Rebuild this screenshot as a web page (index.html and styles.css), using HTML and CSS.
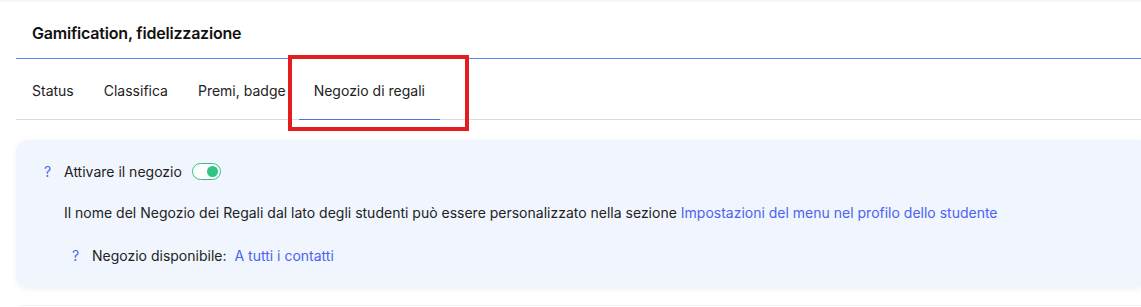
FILE: index.html
```html
<!DOCTYPE html>
<html lang="it">
<head>
    <meta charset="UTF-8">
    <title>Gamification, fidelizzazione</title>
    <link rel="stylesheet" href="styles.css">
</head>
<body>
    <div class="page">
        <div class="page-header">
            <h1>Gamification, fidelizzazione</h1>
        </div>

        <nav class="tabs">
            <a class="tab" href="#">Status</a>
            <a class="tab" href="#">Classifica</a>
            <a class="tab" href="#">Premi, badge</a>
            <a class="tab active" href="#">Negozio di regali<span class="highlight"></span></a>
        </nav>

        <div class="panel">
            <div class="row">
                <span class="help">?</span>
                <span class="label">Attivare il negozio</span>
                <span class="toggle on"><span class="knob"></span></span>
            </div>
            <p class="note">
                Il nome del Negozio dei Regali dal lato degli studenti può essere personalizzato nella sezione
                <a href="#">Impostazioni del menu nel profilo dello studente</a>
            </p>
            <div class="row sub">
                <span class="help">?</span>
                <span class="label">Negozio disponibile:</span>
                <a class="value" href="#">A tutti i contatti</a>
            </div>
        </div>

        <div class="next-card"></div>
    </div>
</body>
</html>
```

FILE: styles.css
```css
* {
    margin: 0;
    padding: 0;
    box-sizing: border-box;
}

body {
    font-family: 'Inter', 'Noto Sans', sans-serif;
    background: #fff;
    color: #222;
    font-size: 14px;
    overflow: hidden;
}

.page {
    padding-left: 16px;
    border-top: 2px solid #f6f6f7;
}

a {
    text-decoration: none;
}

.page-header {
    padding: 21px 16px 0;
    height: 57px;
    border-bottom: 1px solid #5b85f5;
}

.page-header h1 {
    font-size: 16px;
    font-weight: 600;
    color: #111;
    letter-spacing: -0.2px;
}

.tabs {
    display: flex;
    height: 61px;
    padding-left: 16px;
    border-bottom: 1px solid #dcdcdc;
}

.tab {
    position: relative;
    display: flex;
    align-items: center;
    padding-top: 2px;
    margin-right: 30px;
    color: #222;
    font-size: 14px;
}

.tab.active {
    padding: 2px 15px 0;
    margin-left: -17px;
    border-bottom: 1px solid #4c6ef0;
    margin-bottom: -1px;
}

/* annotation frame over the active tab */
.highlight {
    position: absolute;
    left: -11px;
    right: -29px;
    top: -4px;
    bottom: -12px;
    border: 4px solid #e31c1f;
    pointer-events: none;
}

.panel {
    margin-top: 20px;
    background: #f1f6fe;
    border-radius: 12px 0 0 12px;
    box-shadow: 0 2px 6px rgba(0, 0, 0, 0.06);
    padding: 21px 0 22px 28px;
    height: 147px;
}

.row {
    display: flex;
    align-items: center;
    height: 20px;
}

.help {
    color: #4866f5;
    font-size: 14px;
    width: 20px;
}

.label {
    margin-right: 10px;
}

.toggle {
    width: 29px;
    height: 17px;
    border: 1px solid #32c183;
    border-radius: 9px;
    background: #fff;
    display: flex;
    align-items: center;
    justify-content: flex-end;
    padding: 0 2px;
}

.toggle .knob {
    width: 11px;
    height: 11px;
    border-radius: 50%;
    background: #2fc586;
}

.note {
    margin: 22px 0 0 20px;
    line-height: 20px;
}

.note a, .value {
    color: #4a63f2;
}

.row.sub {
    margin: 22px 0 0 28px;
}

.row.sub .label {
    margin-right: 8px;
}

.next-card {
    margin-top: 18px;
    height: 2px;
    border-top: 1px solid #efefef;
    margin-left: 4px;
}
```
